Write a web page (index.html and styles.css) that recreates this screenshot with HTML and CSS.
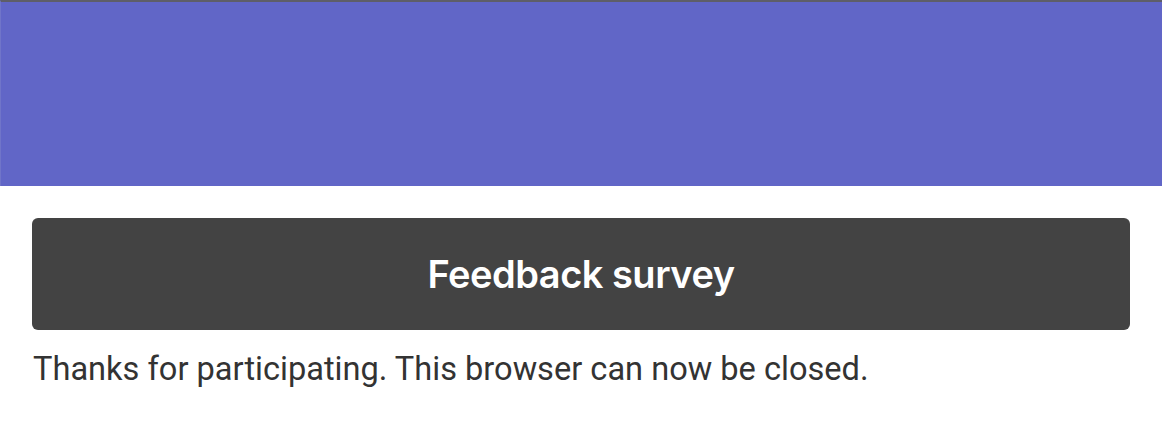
FILE: index.html
```html
<!DOCTYPE html>
<html>
<head>
<meta charset="utf-8">
<link rel="stylesheet" href="styles.css">
</head>
<body>
<header class="banner"></header>
<main class="content">
  <div class="card"><h1 class="card-title">Feedback survey</h1></div>
  <p class="message">Thanks for participating. This browser can now be closed.</p>
</main>
</body>
</html>
```
FILE: styles.css
```css
html, body { margin: 0; padding: 0; background: #fff; }
.banner {
  height: 184px;
  background: #6166c7;
  border-top: 2px solid #5e5e68;
  border-left: 1px solid #7075c9;
}
.content { padding: 32px 32px 0 32px; }
.card {
  background: #434343;
  border-radius: 6px;
  height: 112px;
  display: flex;
  align-items: center;
  justify-content: center;
}
.card-title {
  margin: 0;
  font-family: Inter, "Liberation Sans", sans-serif;
  font-weight: 600;
  font-size: 38px;
  color: #fff;
  letter-spacing: -0.5px;
}
.message {
  margin: 20px 0 0 1px;
  font-family: Roboto, "Liberation Sans", sans-serif;
  font-size: 32.6px;
  color: #333;
}
```
